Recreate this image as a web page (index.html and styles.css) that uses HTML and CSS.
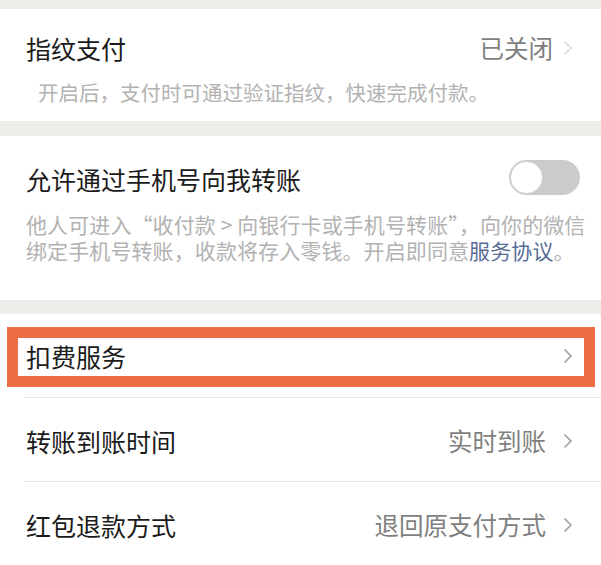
FILE: index.html
```html
<!DOCTYPE html>
<html lang="zh">
<head>
<meta charset="utf-8">
<link rel="stylesheet" href="styles.css">
</head>
<body>
<div class="page">
  <section class="card card-first">
    <div class="row-head">
      <span class="title">指纹支付</span>
      <span class="value">已关闭<svg class="chev chev-light" viewBox="0 0 10 16"><path d="M1.5 1.5 L8 8 L1.5 14.5" /></svg></span>
    </div>
    <p class="sub sub-indent">开启后，支付时可通过验证指纹，快速完成付款。</p>
  </section>

  <section class="card card-second">
    <div class="row-head">
      <span class="title">允许通过手机号向我转账</span>
      <span class="toggle"><span class="knob"></span></span>
    </div>
    <p class="sub desc"><span class="line">他人可进入“收付款 &gt; 向银行卡或手机号转账”，向你的微信</span><span class="line">绑定手机号转账，收款将存入零钱。开启即同意<span class="link">服务协议</span>。</span></p>
  </section>

  <section class="card list">
    <div class="item item-hl">
      <span class="title">扣费服务</span>
      <svg class="chev" viewBox="0 0 10 16"><path d="M1.5 1.5 L8 8 L1.5 14.5" /></svg>
      <span class="highlight"></span>
    </div>
    <div class="item">
      <span class="title">转账到账时间</span>
      <span class="value">实时到账<svg class="chev" viewBox="0 0 10 16"><path d="M1.5 1.5 L8 8 L1.5 14.5" /></svg></span>
    </div>
    <div class="item">
      <span class="title">红包退款方式</span>
      <span class="value">退回原支付方式<svg class="chev" viewBox="0 0 10 16"><path d="M1.5 1.5 L8 8 L1.5 14.5" /></svg></span>
    </div>
  </section>
</div>
</body>
</html>
```

FILE: styles.css
```css
* { box-sizing: border-box; }
html, body {
  margin: 0;
  padding: 0;
  background: #ededed;
  font-family: "Noto Sans CJK SC", "Noto Sans", sans-serif;
}
.page {
  width: 601px;
  height: 565px;
  overflow: hidden;
  padding-top: 9px;
  background: #eeece9;
}
.card {
  background: #ffffff;
}
.card-first {
  height: 112px;
  padding: 24px 26px 0 26px;
  margin-bottom: 15px;
}
.card-second {
  height: 164px;
  padding: 28px 21px 0 26px;
  margin-bottom: 14px;
}
.row-head {
  display: flex;
  align-items: center;
  justify-content: space-between;
  height: 30px;
}
.title {
  font-size: 25px;
  line-height: 30px;
  color: #1b1b1b;
}
.value {
  display: flex;
  align-items: center;
  font-size: 24.5px;
  line-height: 30px;
  color: #7f7f7f;
}
.chev {
  width: 10px;
  height: 16px;
  margin-left: 17px;
  margin-right: 2px;
  flex: none;
}
.chev path {
  fill: none;
  stroke: #9f9f9f;
  stroke-width: 1.6;
}
.chev-light { margin-left: 10px; }
.chev-light path { stroke: #dddddd; }
.sub {
  margin: 0;
  font-size: 20.5px;
  color: #b2b2b2;
}
.sub-indent {
  margin-top: 15px;
  padding-left: 12px;
  line-height: 28px;
}
.desc {
  margin-top: 17px;
  font-size: 21px;
  letter-spacing: 0.1px;
  white-space: nowrap;
}
.line {
  display: block;
  height: 26px;
  line-height: 26px;
}
.link { color: #576b95; }
.toggle {
  position: relative;
  width: 71px;
  height: 35px;
  border-radius: 18px;
  background: #cbcbcb;
  margin-top: -3px;
}
.knob {
  position: absolute;
  left: 1px;
  top: 1px;
  width: 33px;
  height: 33px;
  border-radius: 50%;
  background: #ffffff;
  border: 1px solid #d6d6d6;
}
.list {
  height: 251px;
}
.item {
  position: relative;
  display: flex;
  align-items: center;
  justify-content: space-between;
  height: 84px;
  margin-left: 25px;
  padding: 2px 26px 0 1px;
  border-bottom: 1px solid #e6e6e6;
}
.item:first-child { height: 84px; padding-top: 1px; }
.item:last-child { border-bottom: none; }
.highlight {
  position: absolute;
  left: -18px;
  top: 13px;
  width: 588px;
  height: 60px;
  border: 11px solid #ee6d45;
}
```
